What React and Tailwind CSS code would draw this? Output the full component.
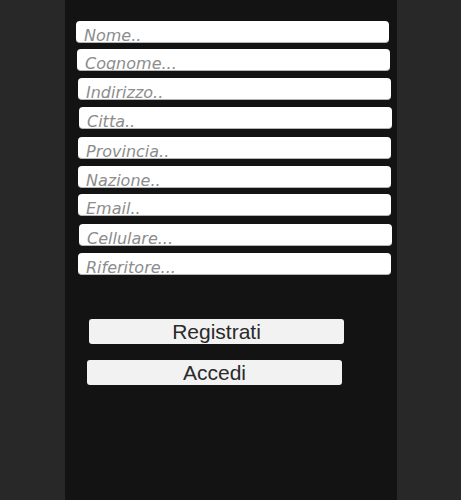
import React from 'react';

// placeholder fields with their small per-row offsets
const fields = [
  { label: 'Nome..', top: 'mt-[21px]', left: 'ml-[11px]' },
  { label: 'Cognome...', top: 'mt-[6px]', left: 'ml-[12px]' },
  { label: 'Indirizzo..', top: 'mt-[7px]', left: 'ml-[13px]' },
  { label: 'Citta..', top: 'mt-[7px]', left: 'ml-[14px]' },
  { label: 'Provincia..', top: 'mt-[8px]', left: 'ml-[13px]' },
  { label: 'Nazione..', top: 'mt-[7px]', left: 'ml-[13px]' },
  { label: 'Email..', top: 'mt-[6px]', left: 'ml-[13px]' },
  { label: 'Cellulare...', top: 'mt-[8px]', left: 'ml-[14px]' },
  { label: 'Riferitore...', top: 'mt-[7px]', left: 'ml-[13px]' },
];

function Field({ label, top, left }) {
  return (
    <div
      className={`${top} ${left} w-[313px] h-[22px] box-border overflow-hidden rounded-[4px] bg-white border-b border-[#b4b4b4] pl-[8px] pt-[7px] text-[16px] leading-[16px] italic text-[#8c8c8c] whitespace-nowrap`}
      style={{ fontFamily: '"DejaVu Sans", sans-serif' }}
    >
      {label}
    </div>
  );
}

export default function App() {
  return (
    <div className="w-full min-h-[500px] bg-[#282828]" style={{ fontFamily: '"Liberation Sans", Arial, sans-serif' }}>
      <div className="ml-[65px] w-[332px] min-h-[500px] bg-[#131313] flex flex-col">
        {fields.map((f) => (
          <Field key={f.label} {...f} />
        ))}
        <button className="mt-[44px] ml-[24px] w-[255px] h-[25px] rounded-[3px] bg-[#f2f2f2] text-[#2a2a2a] text-[21px] leading-none flex items-center justify-center">
          Registrati
        </button>
        <button className="mt-[16px] ml-[22px] w-[255px] h-[25px] rounded-[3px] bg-[#f2f2f2] text-[#2a2a2a] text-[21px] leading-none flex items-center justify-center">
          Accedi
        </button>
      </div>
    </div>
  );
}
